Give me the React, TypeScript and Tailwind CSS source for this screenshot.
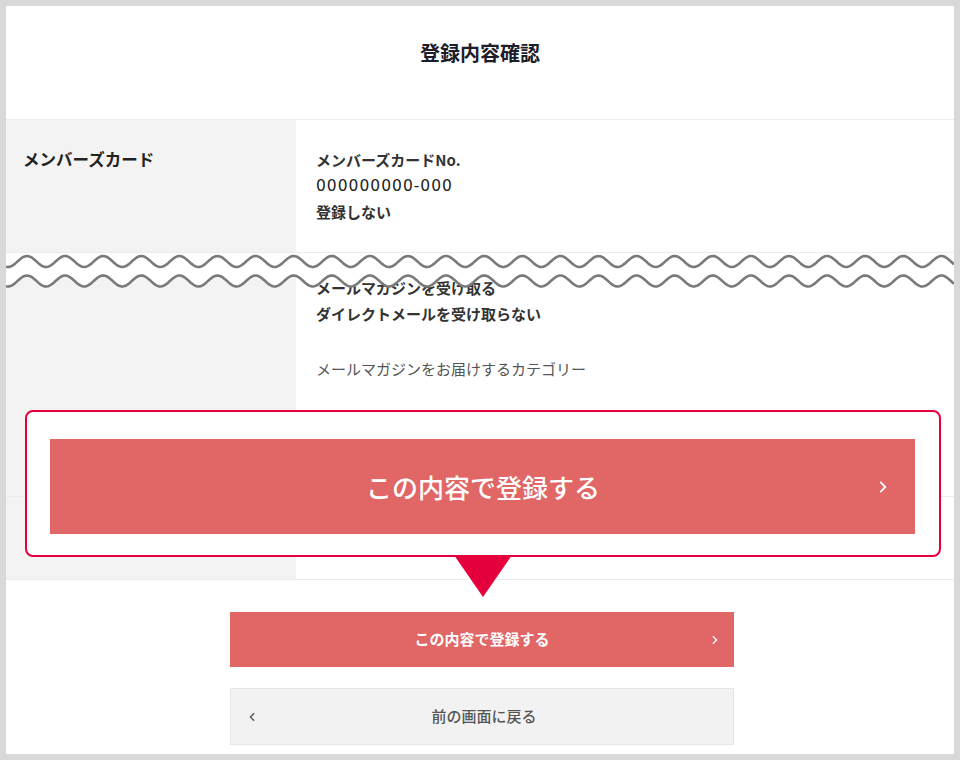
import type { ReactNode } from "react";

const FONT = { fontFamily: '"Noto Sans CJK JP", "Noto Sans", sans-serif' };

// one sine wave as a path, peaks at x0 + k * len
function wavePath(cy: number, amp: number, len: number, w: number, x0: number) {
  const pts: string[] = [];
  for (let x = 0; x <= w; x += 1.5) {
    const y = cy - amp * Math.cos(((x - x0) / len) * 2 * Math.PI);
    pts.push(`${x.toFixed(1)},${y.toFixed(2)}`);
  }
  return "M" + pts.join(" L");
}

function CutWave() {
  const w = 948;
  const top = wavePath(9.5, 5.5, 38.1, w, 21);
  const bottom = wavePath(29, 5.5, 38.1, w, 21);
  // white band from a straight top edge down to the lower wave
  const fill =
    `M0,0 L${w},0 ` +
    bottom
      .replace(/^M/, "")
      .split(" L")
      .reverse()
      .map((p) => "L" + p)
      .join(" ") +
    " Z";
  return (
    <svg width={w} height={40} viewBox={`0 0 ${w} 40`} className="block">
      <path d={fill} fill="#ffffff" />
      <line x1={0} y1={0.5} x2={w} y2={0.5} stroke="#ececec" />
      <path d={top} fill="none" stroke="#7a7a7a" strokeWidth={2.6} />
      <path d={bottom} fill="none" stroke="#7a7a7a" strokeWidth={2.6} />
    </svg>
  );
}

function Chevron({ dir, className }: { dir: "left" | "right"; className?: string }) {
  return (
    <svg viewBox="0 0 8 12" className={className} fill="none" stroke="currentColor" strokeWidth={1.6}>
      {dir === "right" ? <path d="M2 1.5 L6.5 6 L2 10.5" /> : <path d="M6 1.5 L1.5 6 L6 10.5" />}
    </svg>
  );
}

function Row({ label, children, className }: { label?: string; children?: ReactNode; className?: string }) {
  return (
    <div className={`grid grid-cols-[290px_1fr] border-b border-[#ececec] ${className ?? ""}`}>
      <div className="bg-[#f3f3f3] pl-[17px] pt-[26px] text-[16.5px] font-bold leading-[26px] text-[#222]">
        {label}
      </div>
      <div className="bg-white pl-[20px] pt-[27px]">{children}</div>
    </div>
  );
}

export default function App() {
  return (
    <div className="h-[760px] w-[960px] bg-[#d9d9d9] p-[6px]" style={FONT}>
      <div className="relative flex h-full flex-col overflow-hidden bg-white">
        <div className="h-[114px] border-b border-[#efefef] pt-[34px] text-center text-[20px] font-bold leading-[26px] text-[#1d1d2b]">
          登録内容確認
        </div>

        <Row label="メンバーズカード" className="h-[377px]">
          <div className="text-[15px] font-bold leading-[26px] text-[#333]">
            <p>メンバーズカードNo.</p>
            <p className="font-['DejaVu_Sans',sans-serif] text-[15.5px] font-normal tracking-[1px] text-[#222]">
              000000000-000
            </p>
            <p>登録しない</p>
            <p className="mt-[50px]">メールマガジンを受け取る</p>
            <p>ダイレクトメールを受け取らない</p>
          </div>
          <p className="mt-[29px] text-[15px] leading-[26px] text-[#555]">メールマガジンをお届けするカテゴリー</p>
        </Row>
        <Row className="h-[83px]" />

        <div className="flex flex-col items-center gap-[21px] pl-[4px] pt-[32px]">
          <button className="flex h-[55px] w-[504px] items-center bg-[#e16666] pl-[23px] pr-[16px] text-white">
            <span className="flex-1 text-center text-[15px] font-bold">この内容で登録する</span>
            <Chevron dir="right" className="h-[10px] w-[7px]" />
          </button>
          <button className="flex h-[57px] w-[504px] items-center border border-[#e6e6e6] bg-[#f2f2f2] pl-[18px] pr-[21px] text-[#555]">
            <Chevron dir="left" className="h-[10px] w-[7px]" />
            <span className="flex-1 text-center text-[15px] font-medium">前の画面に戻る</span>
          </button>
        </div>

        {/* cut mark over the table */}
        <div className="absolute left-0 top-[246px]">
          <CutWave />
        </div>

        {/* callout */}
        <div className="absolute left-[19px] top-[404px] h-[147px] w-[916px] rounded-[8px] border-2 border-[#e5003d] bg-white pl-[23px] pt-[27px]">
          <div className="flex h-[95px] w-[865px] items-center bg-[#e16666] pl-[38px] pr-[28px] text-white">
            <span className="flex-1 text-center text-[26px] font-medium">この内容で登録する</span>
            <Chevron dir="right" className="h-[14px] w-[9px]" />
          </div>
        </div>
        <svg className="absolute left-[448px] top-[549px]" width={58} height={43} viewBox="0 0 58 43">
          <path d="M0 0 L58 0 L29 42 Z" fill="#e5003d" />
        </svg>
      </div>
    </div>
  );
}
